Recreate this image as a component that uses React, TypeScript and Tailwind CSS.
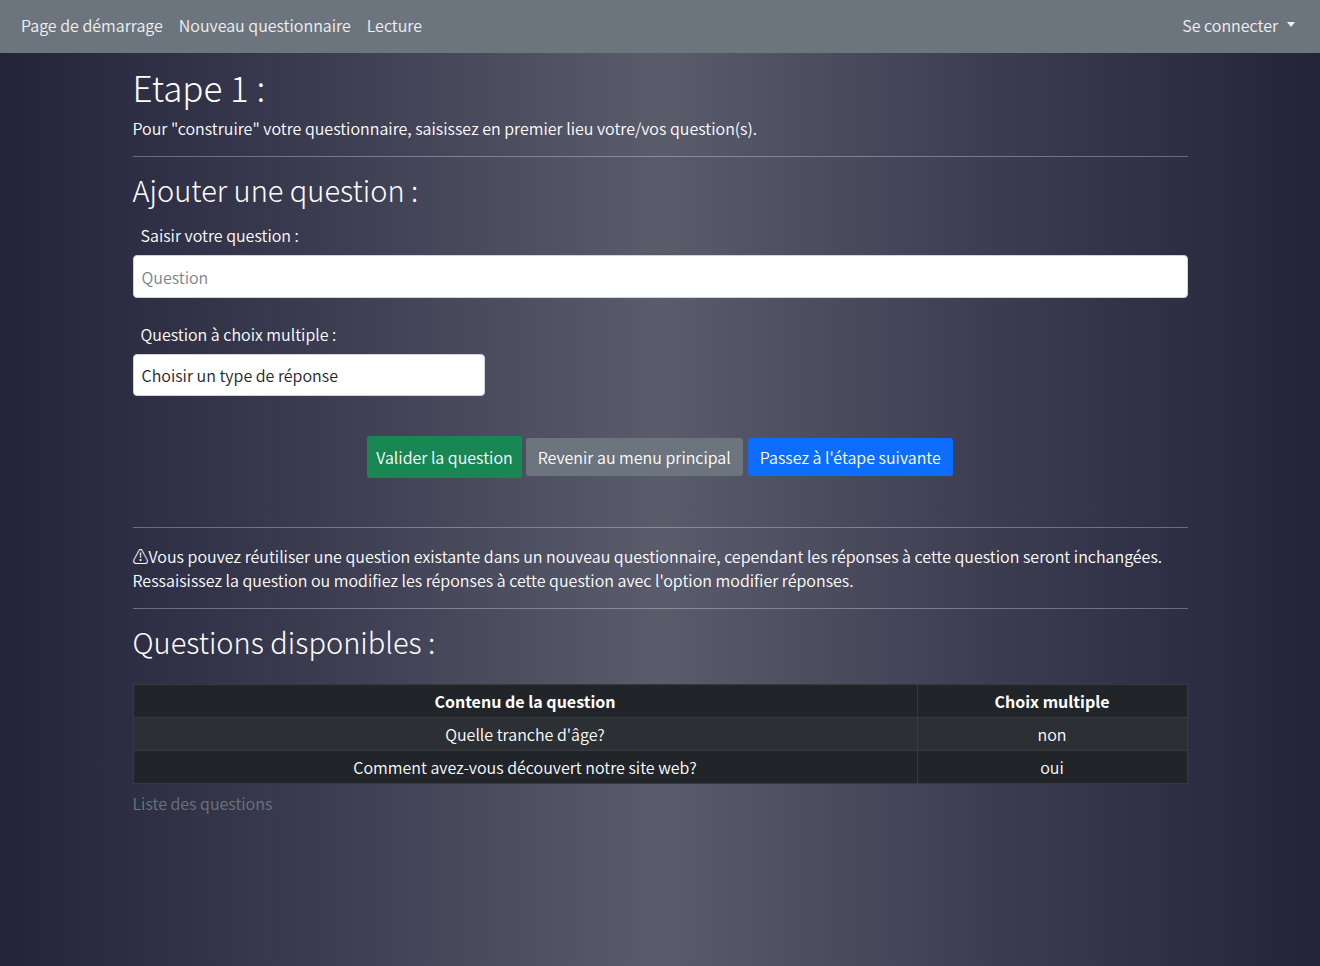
import React from "react";

const rows = [
    { question: "Quelle tranche d'âge?", multiple: "non" },
    { question: "Comment avez-vous découvert notre site web?", multiple: "oui" },
];

const Navbar = () => {
    return (
        <nav className="flex items-center justify-between h-[53px] bg-[#6c757d] px-[21px] pb-[3px]">
            <div className="flex gap-4 text-[16px] text-white/90">
                <a className="cursor-pointer">Page de démarrage</a>
                <a className="cursor-pointer">Nouveau questionnaire</a>
                <a className="cursor-pointer">Lecture</a>
            </div>
            <div className="flex items-center gap-[9px] text-[16px] text-white/90 pr-[4px]">
                <span>Se connecter</span>
                <span className="block w-0 h-0 border-x-[4px] border-x-transparent border-t-[5px] border-t-white/90 mb-[2px]"></span>
            </div>
        </nav>
    );
};

const App = () => {
    return (
        <div
            className="min-h-[966px] text-white font-[350] bg-[linear-gradient(90deg,#23243a_0%,#3c3d51_25%,#5a5b6b_50%,#3c3d51_75%,#23243a_100%)]"
            style={{ fontFamily: '"Noto Sans CJK KR", "Noto Sans", sans-serif' }}
        >
            <Navbar />
            <main className="w-[1055px] mx-auto pt-[12px]">
                <h1 className="text-[35px] leading-[44px] font-light">Etape 1 :</h1>
                <p className="text-[16px] leading-6 mt-[7px]">
                    Pour "construire" votre questionnaire, saisissez en premier lieu votre/vos question(s).
                </p>
                <hr className="border-white/30 mt-[16px]" />

                <h2 className="text-[29px] leading-[40px] font-light mt-[12px]">Ajouter une question :</h2>
                <label className="block text-[16px] leading-6 px-2 mt-[14px]">Saisir votre question :</label>
                <input
                    className="block w-full h-[43px] mt-[8px] rounded-[4px] border border-[#ced4da] bg-white px-2 text-[16px] text-[#212529] placeholder:text-[#7b838a] outline-none"
                    placeholder="Question"
                />
                <label className="block text-[16px] leading-6 px-2 mt-[24px]">Question à choix multiple :</label>
                <div className="w-[352px] h-[42px] mt-[8px] rounded-[4px] border border-[#ced4da] bg-white px-2 flex items-center text-[16px] text-[#212529]">
                    Choisir un type de réponse
                </div>

                <div className="flex justify-center items-center gap-[4px] mt-[40px]">
                    <button className="h-[42px] px-[9px] rounded-[3px] bg-[#198754] text-white text-[16px] font-[350]">
                        Valider la question
                    </button>
                    <button className="h-[38px] px-[12px] rounded-[3px] bg-[#6c757d] text-white text-[16px] font-[350]">
                        Revenir au menu principal
                    </button>
                    <button className="h-[38px] px-[12px] rounded-[3px] bg-[#0d6efd] text-white text-[16px] font-[350] ml-[1px]">
                        Passez à l'étape suivante
                    </button>
                </div>

                <hr className="border-white/30 mt-[49px]" />
                <p className="text-[16px] leading-6 mt-[16px]">
                    ⚠Vous pouvez réutiliser une question existante dans un nouveau questionnaire, cependant les réponses à cette question seront inchangées.
                    <br />
                    Ressaisissez la question ou modifiez les réponses à cette question avec l'option modifier réponses.
                </p>
                <hr className="border-white/30 mt-[16px]" />

                <h2 className="text-[29px] leading-[40px] font-light mt-[12px]">Questions disponibles :</h2>
                <table className="w-full mt-[23px] border-collapse text-[16px] text-white">
                    <thead>
                        <tr className="bg-[#212529]">
                            <th className="h-[33px] border border-[#373b3e] font-bold">Contenu de la question</th>
                            <th className="h-[33px] w-[270px] border border-[#373b3e] font-bold">Choix multiple</th>
                        </tr>
                    </thead>
                    <tbody>
                        {rows.map((row, i) => (
                            <tr key={i} className={i % 2 === 0 ? "bg-[#2c3034]" : "bg-[#212529]"}>
                                <td className="h-[33px] border border-[#373b3e] text-center">{row.question}</td>
                                <td className="h-[33px] border border-[#373b3e] text-center">{row.multiple}</td>
                            </tr>
                        ))}
                    </tbody>
                </table>
                <p className="text-[16px] leading-6 mt-[7px] text-[#6c757d]">Liste des questions</p>
            </main>
        </div>
    );
};

export default App;
